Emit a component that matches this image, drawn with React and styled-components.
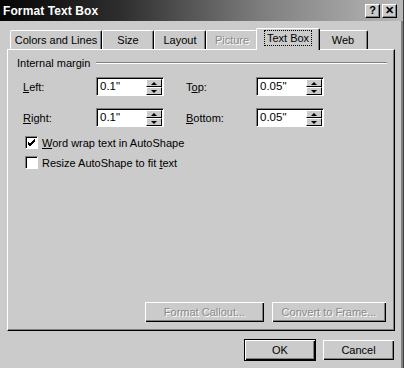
import React from 'react';
import styled, {createGlobalStyle} from 'styled-components';

const Global = createGlobalStyle`
  body {
    margin: 0;
    background: #cbcbcb;
  }
  * { box-sizing: border-box; }
`;

const Dialog = styled.div`
  width: 404px;
  height: 368px;
  background: #cbcbcb;
  border-right: 1px solid #404040;
  box-shadow: inset -2px 0 0 #808080;
  display: flex;
  flex-direction: column;
  font-family: "Liberation Sans", Arial, sans-serif;
  font-size: 11px;
  color: #000;
  overflow: hidden;
`;

const TitleBar = styled.div`
  height: 21px;
  display: flex;
  align-items: center;
  padding: 0 6px 0 3px;
  background: linear-gradient(to right, #050505 0%, #2e2e2e 30%, #7e7e7e 65%, #b8b8b8 100%);
`;

const TitleText = styled.div`
  flex: 1;
  color: #fff;
  font-weight: bold;
  font-size: 12px;
  letter-spacing: 0.1px;
`;

const CapButton = styled.div`
  width: 15px;
  height: 14px;
  margin-left: ${p => p.$gap || 0}px;
  background: #cbcbcb;
  border-top: 1px solid #fff;
  border-left: 1px solid #fff;
  border-right: 1px solid #000;
  border-bottom: 1px solid #000;
  box-shadow: inset -1px -1px 0 #808080;
  display: flex;
  align-items: center;
  justify-content: center;
  font-weight: bold;
  font-size: 11px;
  line-height: 1;
`;

const TabRow = styled.div`
  display: flex;
  align-items: flex-end;
  height: 28px;
  padding-left: 10px;
`;

const Tab = styled.div`
  position: relative;
  width: ${p => p.$w}px;
  height: ${p => (p.$active ? 22 : 19)}px;
  margin: 0 ${p => (p.$active ? -2 : 0)}px ${p => (p.$active ? -1 : 0)}px;
  z-index: ${p => (p.$active ? 2 : 1)};
  background: #cbcbcb;
  border-top: 1px solid #fff;
  border-left: 1px solid #fff;
  border-right: 1px solid #000;
  border-top-left-radius: 2px;
  border-top-right-radius: 2px;
  box-shadow: inset -1px 0 0 #808080;
  display: flex;
  align-items: ${p => (p.$active ? 'flex-start' : 'center')};
  padding-top: ${p => (p.$active ? 3 : 0)}px;
  justify-content: center;
  white-space: nowrap;
  font-size: 11px;
  color: ${p => (p.$disabled ? '#8a8a8a' : '#000')};
  text-shadow: ${p => (p.$disabled ? '1px 1px 0 #fff' : 'none')};
`;

const Focus = styled.span`
  outline: 1px dotted #000;
  outline-offset: 1px;
  padding: 0 1px;
`;

const Panel = styled.div`
  margin: 0 8px 0 7px;
  height: 282px;
  border-top: 1px solid #fff;
  border-left: 1px solid #fff;
  border-right: 1px solid #000;
  border-bottom: 1px solid #000;
  box-shadow: inset -1px -1px 0 #808080;
  display: flex;
  flex-direction: column;
  padding: 6px 7px 7px 9px;
`;

const Group = styled.div`
  display: flex;
  align-items: center;
  height: 13px;
`;

const GroupTitle = styled.span`
  margin-right: 6px;
`;

const Etch = styled.div`
  flex: 1;
  height: 2px;
  border-top: 1px solid #808080;
  border-bottom: 1px solid #fff;
`;

const Grid = styled.div`
  display: grid;
  grid-template-columns: 73px 68px 22px 70px 68px;
  grid-auto-rows: 19px;
  row-gap: 12px;
  align-items: center;
  margin: 8px 0 0 6px;
`;

const Label = styled.span`
  grid-column: ${p => p.$col};
`;

const Key = styled.span`
  text-decoration: underline;
`;

const Field = styled.div`
  grid-column: ${p => p.$col};
  height: 19px;
  display: flex;
  background: #fff;
  border-top: 1px solid #808080;
  border-left: 1px solid #808080;
  border-right: 1px solid #fff;
  border-bottom: 1px solid #fff;
  box-shadow: inset 1px 1px 0 #000;
`;

const FieldText = styled.div`
  flex: 1;
  padding: 2px 0 0 3px;
  font-size: 11.5px;
`;

const Spin = styled.div`
  width: 16px;
  display: flex;
  flex-direction: column;
  margin: 1px 1px 0 0;
`;

const SpinHalf = styled.div`
  flex: 1;
  background: #cbcbcb;
  border-top: 1px solid #fff;
  border-left: 1px solid #fff;
  border-right: 1px solid #000;
  border-bottom: 1px solid #000;
  display: flex;
  align-items: center;
  justify-content: center;
`;

const Arrow = styled.div`
  width: 0;
  height: 0;
  border-left: 3px solid transparent;
  border-right: 3px solid transparent;
  ${p => (p.$up ? 'border-bottom: 3px solid #000;' : 'border-top: 3px solid #000;')}
`;

const Checks = styled.div`
  display: flex;
  flex-direction: column;
  gap: 7px;
  margin: 9px 0 0 8px;
`;

const CheckRow = styled.div`
  display: flex;
  align-items: center;
  height: 13px;
`;

const Box = styled.div`
  width: 13px;
  height: 13px;
  margin-right: 4px;
  background: #fff;
  border-top: 1px solid #808080;
  border-left: 1px solid #808080;
  border-right: 1px solid #fff;
  border-bottom: 1px solid #fff;
  box-shadow: inset 1px 1px 0 #000;
  display: flex;
  align-items: center;
  justify-content: center;
`;

const ButtonRow = styled.div`
  margin-top: auto;
  display: flex;
  justify-content: flex-end;
  gap: ${p => p.$gap}px;
`;

const Button = styled.div`
  width: ${p => p.$w}px;
  height: ${p => p.$h || 22}px;
  background: #cbcbcb;
  border: 1px solid ${p => (p.$default ? '#000' : 'transparent')};
  box-shadow: inset 1px 1px 0 #fff, inset -1px -1px 0 #000, inset -2px -2px 0 #808080;
  display: flex;
  align-items: center;
  justify-content: center;
  color: ${p => (p.$disabled ? '#8a8a8a' : '#000')};
  text-shadow: ${p => (p.$disabled ? '1px 1px 0 #fff' : 'none')};
`;

const Footer = styled.div`
  display: flex;
  justify-content: flex-end;
  gap: 6px;
  padding: 8px 8px 0 0;
`;

const Spinner = ({value}) => (
  <>
    <FieldText>{value}</FieldText>
    <Spin>
      <SpinHalf><Arrow $up /></SpinHalf>
      <SpinHalf><Arrow /></SpinHalf>
    </Spin>
  </>
);

const Tick = () => (
  <svg width="9" height="9" viewBox="0 0 9 9">
    <path d="M1 4 L3 6 L8 1 M1 5 L3 7 L8 2 M1 6 L3 8 L8 3" stroke="#000" strokeWidth="1" fill="none" />
  </svg>
);

const tabs = [
  {label: 'Colors and Lines', w: 92},
  {label: 'Size', w: 52},
  {label: 'Layout', w: 52},
  {label: 'Picture', w: 52, disabled: true},
  {label: 'Text Box', w: 64, active: true},
  {label: 'Web', w: 50},
];

const App = () => (
  <Dialog>
    <Global />
    <TitleBar>
      <TitleText>Format Text Box</TitleText>
      <CapButton>?</CapButton>
      <CapButton $gap={2}>✕</CapButton>
    </TitleBar>

    <TabRow>
      {tabs.map(t => (
        <Tab key={t.label} $w={t.w} $active={t.active} $disabled={t.disabled}>
          {t.active ? <Focus>{t.label}</Focus> : t.label}
        </Tab>
      ))}
    </TabRow>

    <Panel>
      <Group>
        <GroupTitle>Internal margin</GroupTitle>
        <Etch />
      </Group>

      <Grid>
        <Label $col={1}><Key>L</Key>eft:</Label>
        <Field $col={2}><Spinner value={'0.1"'} /></Field>
        <Label $col={4}>T<Key>o</Key>p:</Label>
        <Field $col={5}><Spinner value={'0.05"'} /></Field>

        <Label $col={1}><Key>R</Key>ight:</Label>
        <Field $col={2}><Spinner value={'0.1"'} /></Field>
        <Label $col={4}><Key>B</Key>ottom:</Label>
        <Field $col={5}><Spinner value={'0.05"'} /></Field>
      </Grid>

      <Checks>
        <CheckRow><Box><Tick /></Box><span><Key>W</Key>ord wrap text in AutoShape</span></CheckRow>
        <CheckRow><Box /><span>Resize AutoShape to fit <Key>t</Key>ext</span></CheckRow>
      </Checks>

      <ButtonRow $gap={6}>
        <Button $w={121} $disabled>Format Callout...</Button>
        <Button $w={116} $disabled>Convert to Frame...</Button>
      </ButtonRow>
    </Panel>

    <Footer>
      <Button $w={72} $default>OK</Button>
      <Button $w={73}>Cancel</Button>
    </Footer>
  </Dialog>
);

export default App;
